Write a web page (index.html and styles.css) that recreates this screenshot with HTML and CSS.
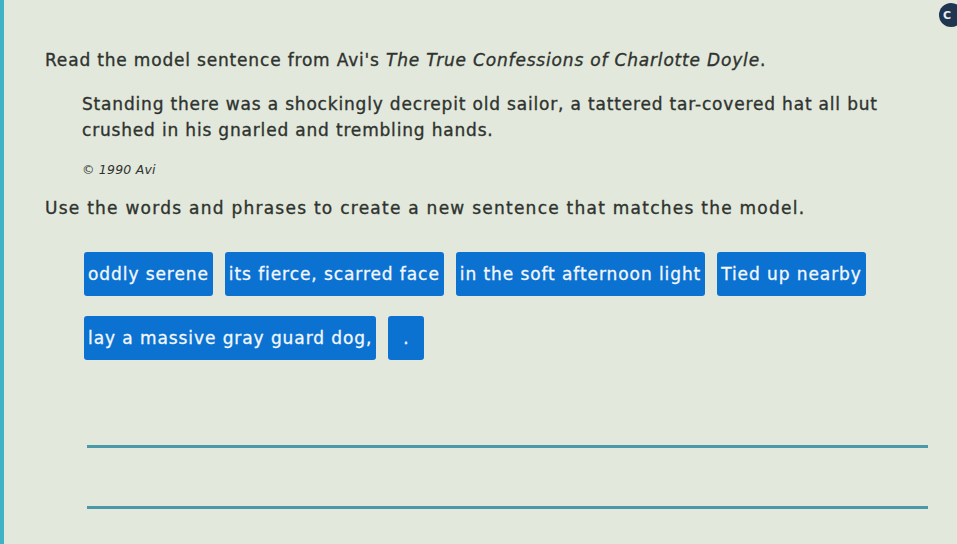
FILE: index.html
```html
<!DOCTYPE html>
<html>
<head>
<meta charset="utf-8">
<link rel="stylesheet" href="styles.css">
</head>
<body>
<div class="page">
  <div class="badge"><span>C</span></div>
  <div class="content">
    <p class="prompt">Read the model sentence from Avi's <i>The True Confessions of Charlotte Doyle</i>.</p>
    <p class="quote">Standing there was a shockingly decrepit old sailor, a tattered tar-covered hat all but crushed in his gnarled and trembling hands.</p>
    <p class="copy">© 1990 Avi</p>
    <p class="prompt instr">Use the words and phrases to create a new sentence that matches the model.</p>
    <div class="tiles">
      <div class="row">
        <span class="tile">oddly serene</span>
        <span class="tile">its fierce, scarred face</span>
        <span class="tile">in the soft afternoon light</span>
        <span class="tile">Tied up nearby</span>
      </div>
      <div class="row">
        <span class="tile">lay a massive gray guard dog,</span>
        <span class="tile dot">.</span>
      </div>
    </div>
    <div class="answer">
      <div class="line"></div>
      <div class="line"></div>
    </div>
  </div>
</div>
</body>
</html>
```
FILE: styles.css
```css
html, body {
  margin: 0;
  padding: 0;
}
body {
  width: 957px;
  height: 544px;
  overflow: hidden;
  background: #e2e8dc;
  font-family: "DejaVu Sans", Verdana, sans-serif;
  color: #2f332f;
}
.page {
  position: relative;
  height: 544px;
  border-left: 4px solid #3fb3c6;
  box-sizing: border-box;
}
.badge {
  position: absolute;
  top: 3px;
  right: -6px;
  width: 24px;
  height: 24px;
  border-radius: 50%;
  background: #1f3550;
  color: #e9eef2;
  font-size: 11px;
  font-weight: bold;
  display: flex;
  align-items: center;
  justify-content: center;
}
.badge span {
  margin-right: 8px;
}
.content {
  padding: 49px 0 0 41px;
}
p {
  margin: 0;
}
.prompt {
  font-size: 17px;
  line-height: 22px;
  letter-spacing: 0.82px;
  -webkit-text-stroke: 0.35px #2f332f;
}
.quote {
  margin: 20px 0 0 37px;
  width: 830px;
  font-size: 17px;
  line-height: 26px;
  letter-spacing: 0.82px;
  -webkit-text-stroke: 0.35px #2f332f;
}
.copy {
  margin: 19px 0 0 37px;
  font-size: 12.5px;
  font-style: italic;
  letter-spacing: 0.2px;
}
.instr {
  margin-top: 20px;
  letter-spacing: 1.25px;
}
.tiles {
  margin: 33px 0 0 39px;
  display: flex;
  flex-direction: column;
  gap: 20px;
}
.row {
  display: flex;
  gap: 12px;
}
.tile {
  background: #0b72d1;
  color: #f4f8fc;
  font-size: 17px;
  height: 44px;
  display: flex;
  align-items: center;
  padding: 0 4px;
  border-radius: 3px;
  letter-spacing: 0.92px;
  -webkit-text-stroke: 0.3px #f4f8fc;
}
.tile.dot {
  width: 28px;
  padding: 0 4px;
  justify-content: center;
}
.answer {
  margin: 85px 0 0 42px;
  width: 841px;
  display: flex;
  flex-direction: column;
  gap: 58px;
}
.line {
  height: 3px;
  background: #4a98a8;
}
```
